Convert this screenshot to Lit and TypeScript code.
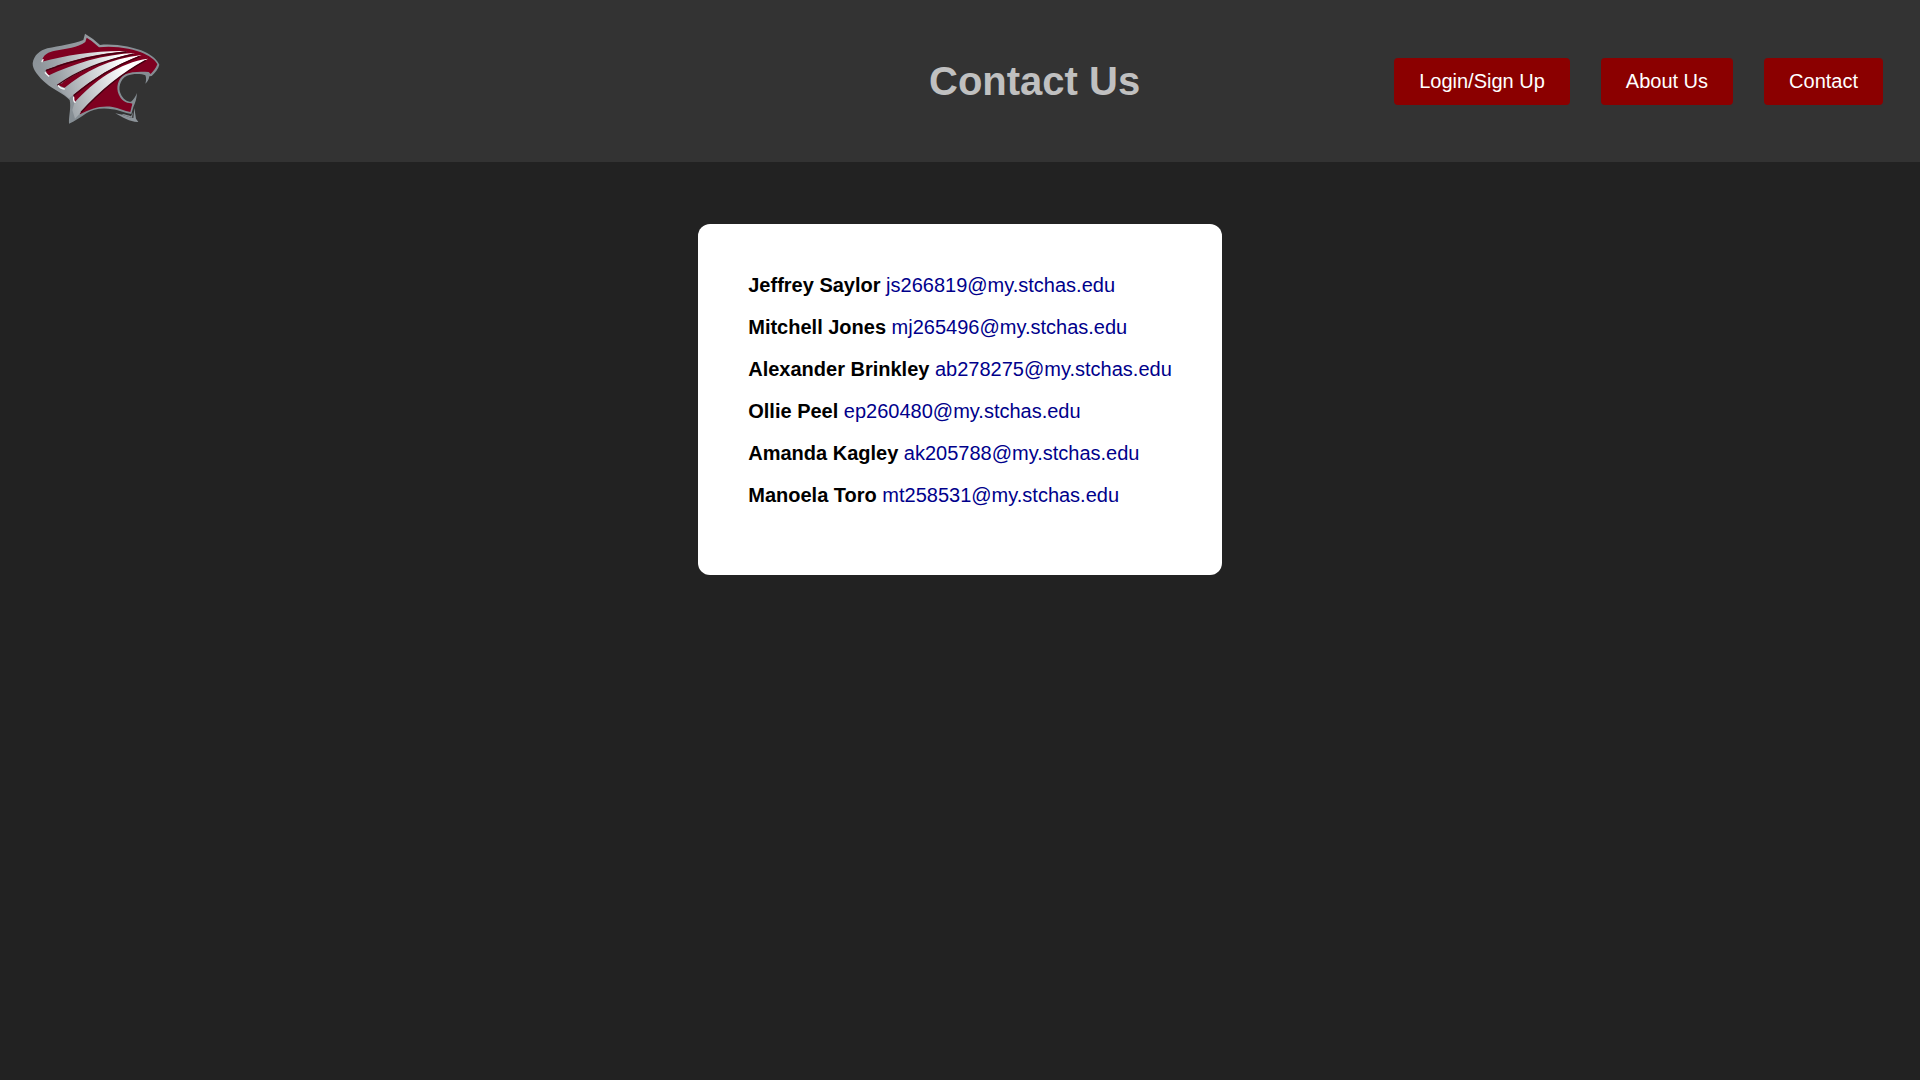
import { LitElement, html, css } from "lit";
import { customElement } from "lit/decorators.js";

interface Person {
  name: string;
  email: string;
}

const PEOPLE: Person[] = [
  { name: "Jeffrey Saylor", email: "js266819@my.stchas.edu" },
  { name: "Mitchell Jones", email: "mj265496@my.stchas.edu" },
  { name: "Alexander Brinkley", email: "ab278275@my.stchas.edu" },
  { name: "Ollie Peel", email: "ep260480@my.stchas.edu" },
  { name: "Amanda Kagley", email: "ak205788@my.stchas.edu" },
  { name: "Manoela Toro", email: "mt258531@my.stchas.edu" },
];

@customElement("cougar-logo")
class CougarLogo extends LitElement {
  static styles = css`
    :host {
      display: block;
    }
    .mark {
      display: block;
      width: 150px;
      height: 120px;
    }
  `;

  render() {
    return html`
      <svg class="mark" viewBox="0 3 450 360" role="img" aria-label="Cougar logo">
        <defs>
          <linearGradient id="silver" gradientUnits="userSpaceOnUse" x1="70" y1="200" x2="350" y2="110">
            <stop offset="0" stop-color="#8b9298" />
            <stop offset="0.2" stop-color="#9fa5aa" />
            <stop offset="0.5" stop-color="#cdd0d3" />
            <stop offset="0.85" stop-color="#ffffff" />
          </linearGradient>
          <linearGradient id="edge" gradientUnits="userSpaceOnUse" x1="40" y1="100" x2="200" y2="250">
            <stop offset="0" stop-color="#8a9197" />
            <stop offset="0.5" stop-color="#969ca1" />
            <stop offset="1" stop-color="#858d93" />
          </linearGradient>
        </defs>
        <!-- silver silhouette -->
        <path
          fill="url(#edge)"
          d="M195 41 L219 57 L240 75 C280 70 340 80 375 96 C396 106 412 120 418 134
             C416 145 406 157 395 168 L388 169 C387 178 382 186 376 191 C379 181 379 172 376 166
             C366 161 338 160 321 167 C299 178 294 205 302 221 C309 237 321 245 333 245
             C341 240 346 230 351 219 C350 234 346 249 340 261 L334 282
             C316 280 294 269 277 268 C245 262 218 268 199 280 C184 290 165 304 147 311
             C146 288 154 262 149 240 C132 221 98 208 78 190 C55 170 37 148 38 130
             C42 105 60 91 82 85 C118 77 158 73 190 60 Z"
        />
        <path fill="#8d949a" d="M286 280 C306 283 322 291 340 294 L343 264 L348 296 L355 306 C331 307 308 292 286 280 Z" />
        <path fill="#8d949a" d="M304 282 C316 283 326 286 333 289 L339 277 L336 293 C324 291 314 287 304 282 Z" />
        <!-- crimson face -->
        <path
          fill="#7f0020"
          d="M200 53 L215 63 L237 82 C285 76 342 87 373 101 C392 110 407 121 412 133
             C408 144 400 154 392 162 L386 156 C365 154 333 154 316 163 C292 176 288 204 296 223
             C303 241 318 250 333 250 L337 251 L331 276 C314 274 295 264 278 261
             C240 256 210 268 180 283 C177 276 174 263 177 252 L162 245 C158 237 165 229 160 224
             L137 205 L113 195 L130 188 L104 168 L82 166 L77 149 L110 139 L66 124
             C68 103 87 96 105 92 C140 86 172 83 196 66 Z"
        />
        <!-- mane stripes -->
        <g fill="url(#silver)">
          <path d="M66 125 C140 105 230 91 323 93 C237 101 155 119 91 144 L76 150 L58 142 Z" />
          <path d="M82 168 C160 131 250 103 345 99 C262 117 180 150 128 187 L108 197 L90 184 Z" />
          <path d="M129 207 C195 153 270 116 365 105 C288 133 217 176 160 225 L147 235 L120 212 Z" />
          <path d="M164 247 C220 184 300 127 384 116 C315 153 242 209 180 280 L165 296 L157 270 Z" />
        </g>
        <g fill="none" stroke="#440011" stroke-width="4" stroke-linecap="round">
          <path d="M79 151 C155 121 240 104 318 96" />
          <path d="M113 195 C175 150 258 120 338 103" />
          <path d="M162 226 C220 177 290 136 357 110" />
          <path d="M184 276 C245 209 316 155 376 122" />
        </g>
        <g fill="none" stroke="#f4f5f6" stroke-width="4" stroke-linecap="round">
          <path d="M76 158 L86 168" />
          <path d="M115 197 C119 204 126 206 133 207" />
          <path d="M161 232 C160 240 161 244 165 247" />
          <path d="M69 119 L66 125" />
        </g>
      </svg>
    `;
  }
}

@customElement("site-header")
class SiteHeader extends LitElement {
  static styles = css`
    :host {
      display: block;
    }
    .bar {
      display: flex;
      align-items: center;
      padding: 21px 37px 21px 20px;
      background: #333333;
    }
    .home {
      margin-right: auto;
    }
    .title {
      margin: 0 254px 0 0;
      font-size: 40px;
      line-height: 47px;
      font-weight: bold;
      color: #c0c0c0;
      white-space: nowrap;
    }
    .nav {
      display: flex;
      gap: 31px;
    }
    .link {
      padding: 12px 25px;
      border-radius: 4px;
      background: #8b0000;
      color: #ffffff;
      font-size: 20px;
      line-height: 23px;
      text-decoration: none;
      white-space: nowrap;
    }
  `;

  render() {
    return html`
      <header class="bar">
        <a class="home" href="#home"><cougar-logo></cougar-logo></a>
        <h1 class="title">Contact Us</h1>
        <nav class="nav">
          <a class="link" href="#login">Login/Sign Up</a>
          <a class="link" href="#about">About Us</a>
          <a class="link" href="#contact">Contact</a>
        </nav>
      </header>
    `;
  }
}

@customElement("app-root")
class AppRoot extends LitElement {
  static styles = css`
    :host {
      display: block;
      min-height: 100vh;
      background: #222222;
      color: #000000;
      font-family: "Liberation Sans", Arial, sans-serif;
    }
    .main {
      display: flex;
      justify-content: center;
      padding: 62px 20px;
    }
    .card {
      padding: 50px 50px 68px;
      border-radius: 12px;
      background: #ffffff;
    }
    .people {
      display: grid;
      gap: 19px;
      margin: 0;
      padding: 0;
      list-style: none;
      font-size: 20px;
      line-height: 23px;
    }
    .email {
      color: #00008b;
      text-decoration: none;
    }
  `;

  render() {
    return html`
      <site-header></site-header>
      <main class="main">
        <section class="card">
          <ul class="people">
            ${PEOPLE.map(
              (p) => html`<li><strong>${p.name}</strong> <a class="email" href="mailto:${p.email}">${p.email}</a></li>`
            )}
          </ul>
        </section>
      </main>
    `;
  }
}
